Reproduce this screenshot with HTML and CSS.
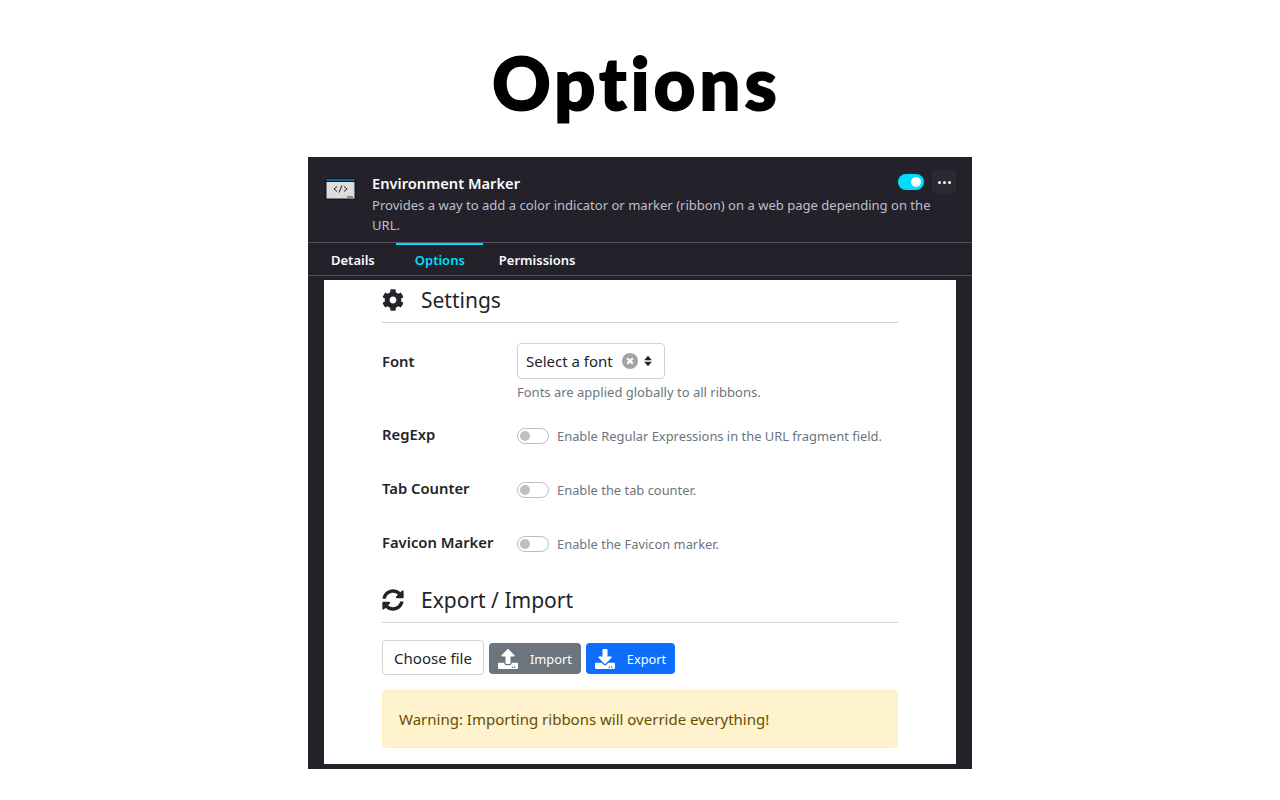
FILE: index.html
```html
<!DOCTYPE html>
<html>
	<head>
		<meta charset="utf-8" />
		<title>Options</title>
		<link rel="stylesheet" href="styles.css">
	</head>

	<body>
		<h1 class="page-title">Options</h1>
		<div class="panel">
			<div class="addon-head">
				<svg class="addon-icon" viewBox="0 0 31 22">
					<rect x="0" y="0" width="31" height="22" rx="3" fill="#14181f" />
					<rect x="1.500" y="1" width="28" height="2" fill="#1a5f96" />
					<rect x="1.500" y="4" width="28" height="16.500" fill="#dcdcdc" />
					<rect x="22" y="18" width="6" height="2.500" fill="#8a8a8a" />
					<path d="M12 8.500L9 11l3 2.500M19 8.500l3 2.500-3 2.500M17 7.500l-3 7" fill="none" stroke="#222" stroke-width="1" />
				</svg>
				<div class="addon-text">
					<div class="addon-name">Environment Marker</div>
					<div class="addon-desc">Provides a way to add a color indicator or marker (ribbon) on a web page depending on the URL.</div>
				</div>
				<div class="addon-actions">
					<span class="main-toggle"></span>
					<span class="more-btn"><i></i><i></i><i></i></span>
				</div>
			</div>
			<div class="tabs">
				<a class="tab">Details</a>
				<a class="tab on">Options</a>
				<a class="tab">Permissions</a>
			</div>
			<div class="sheet">
				<div class="section-title">
					<svg class="section-icon" viewBox="0 0 512 512"><path d="M487.4 315.7l-42.6-24.6c4.3-23.2 4.3-47 0-70.2l42.6-24.6c4.9-2.8 7.1-8.6 5.5-14-11.1-35.6-30-67.8-54.7-94.6-3.8-4.1-10-5.1-14.8-2.3L380.8 110c-17.9-15.4-38.5-27.3-60.8-35.1V25.800c0-5.600-3.900-10.500-9.400-11.700-36.700-8.200-74.300-7.800-109.200 0-5.500 1.200-9.400 6.100-9.400 11.700V75c-22.200 7.900-42.800 19.800-60.800 35.100L88.700 85.500c-4.900-2.800-11-1.900-14.800 2.300-24.700 26.700-43.600 58.900-54.700 94.600-1.700 5.400.6 11.200 5.500 14L67.300 221c-4.300 23.200-4.300 47 0 70.200l-42.600 24.600c-4.900 2.800-7.100 8.600-5.500 14 11.100 35.600 30 67.800 54.700 94.600 3.800 4.100 10 5.100 14.800 2.300l42.600-24.600c17.900 15.400 38.500 27.300 60.800 35.100v49.200c0 5.600 3.900 10.500 9.400 11.700 36.700 8.200 74.300 7.800 109.200 0 5.500-1.200 9.400-6.100 9.400-11.700v-49.200c22.200-7.900 42.800-19.800 60.800-35.100l42.600 24.600c4.900 2.800 11 1.900 14.800-2.300 24.700-26.700 43.600-58.900 54.700-94.600 1.500-5.500-.7-11.300-5.600-14.100zM256 336c-44.100 0-80-35.900-80-80s35.900-80 80-80 80 35.900 80 80-35.900 80-80 80z"/></svg>
					<span>Settings</span>
				</div>

				<div class="row row-font">
					<div class="row-label">Font</div>
					<div class="row-body">
						<div class="font-select">
							<span>Select a font</span>
							<svg class="clear-icon" viewBox="0 0 16 16"><circle cx="8" cy="8" r="8" fill="#a3a3a3" /><path d="M5.200 5.200l5.600 5.600M10.800 5.200l-5.600 5.600" stroke="#fff" stroke-width="2.200" /></svg>
							<svg class="sort-icon" viewBox="0 0 10 14"><path d="M5 1l4.500 5H.500zM5 13L.500 8h9z" fill="#222" /></svg>
						</div>
						<div class="hint">Fonts are applied globally to all ribbons.</div>
					</div>
				</div>

				<div class="row row-switch">
					<div class="row-label">RegExp</div>
					<div class="switch-line"><span class="switch"></span><span class="hint">Enable Regular Expressions in the URL fragment field.</span></div>
				</div>
				<div class="row row-switch">
					<div class="row-label">Tab Counter</div>
					<div class="switch-line"><span class="switch"></span><span class="hint">Enable the tab counter.</span></div>
				</div>
				<div class="row row-switch">
					<div class="row-label">Favicon Marker</div>
					<div class="switch-line"><span class="switch"></span><span class="hint">Enable the Favicon marker.</span></div>
				</div>

				<div class="section-title section-second">
					<svg class="section-icon" viewBox="0 0 512 512"><path d="M370.720 133.280C339.458 104.008 298.888 87.962 255.848 88c-77.458.068-144.328 53.178-162.791 126.850-1.344 5.363-6.122 9.150-11.651 9.150H24.103c-7.498 0-13.194-6.807-11.807-14.176C33.933 94.924 134.813 8 256 8c66.448 0 126.791 26.136 171.315 68.685L463.030 40.970C478.149 25.851 504 36.559 504 57.941V192c0 13.255-10.745 24-24 24H345.941c-21.382 0-32.090-25.851-16.971-40.971l41.750-41.749zM32 296h134.059c21.382 0 32.090 25.851 16.971 40.971l-41.750 41.750c31.262 29.273 71.835 45.319 114.876 45.280 77.418-.07 144.315-53.144 162.787-126.849 1.344-5.363 6.122-9.150 11.651-9.150h57.304c7.498 0 13.194 6.807 11.807 14.176C478.067 417.076 377.187 504 256 504c-66.448 0-126.791-26.136-171.315-68.685L48.970 471.030C33.851 486.149 8 475.441 8 454.059V320c0-13.255 10.745-24 24-24z"/></svg>
					<span>Export / Import</span>
				</div>

				<div class="file-row">
					<span class="btn btn-file">Choose file</span>
					<span class="btn btn-grey">
						<svg viewBox="0 0 512 512"><path d="M296 384h-80c-13.300 0-24-10.700-24-24V192h-87.700c-17.800 0-26.700-21.500-14.100-34.100L242.300 5.700c7.500-7.500 19.800-7.500 27.300 0l152.200 152.200c12.600 12.600 3.700 34.100-14.100 34.100H320v168c0 13.300-10.700 24-24 24zm216-8v112c0 13.300-10.700 24-24 24H24c-13.300 0-24-10.700-24-24V376c0-13.300 10.700-24 24-24h136v8c0 30.900 25.100 56 56 56h80c30.900 0 56-25.100 56-56v-8h136c13.300 0 24 10.700 24 24zm-124 88c0-11-9-20-20-20s-20 9-20 20 9 20 20 20 20-9 20-20zm64 0c0-11-9-20-20-20s-20 9-20 20 9 20 20 20 20-9 20-20z"/></svg>
						Import
					</span>
					<span class="btn btn-blue">
						<svg viewBox="0 0 512 512"><path d="M216 0h80c13.300 0 24 10.700 24 24v168h87.700c17.800 0 26.700 21.500 14.100 34.100L269.700 378.300c-7.500 7.500-19.800 7.500-27.300 0L90.100 226.100c-12.600-12.600-3.700-34.100 14.100-34.100H192V24c0-13.300 10.700-24 24-24zm296 376v112c0 13.300-10.700 24-24 24H24c-13.300 0-24-10.700-24-24V376c0-13.300 10.700-24 24-24h146.700l49 49c20.100 20.100 52.500 20.100 72.600 0l49-49H488c13.300 0 24 10.700 24 24zm-124 88c0-11-9-20-20-20s-20 9-20 20 9 20 20 20 20-9 20-20zm64 0c0-11-9-20-20-20s-20 9-20 20 9 20 20 20 20-9 20-20z"/></svg>
						Export
					</span>
				</div>

				<div class="warning">Warning: Importing ribbons will override everything!</div>
			</div>
		</div>
	</body>

</html>
```

FILE: styles.css
```css
body {
	margin: 0;
	background: #fff;
	font-family: "Noto Sans", "Open Sans", sans-serif;
	color: #212529;
}

.page-title {
	margin: 0;
	height: 157px;
	box-sizing: border-box;
	padding: 34px 7px 0 0;
	text-align: center;
	font-family: "Lato", sans-serif;
	font-size: 72px;
	line-height: 96px;
	font-weight: 900;
	letter-spacing: 4.3px;
	-webkit-text-stroke: 2px #000;
	color: #000;
}

.panel {
	width: 664px;
	height: 612px;
	margin: 0 auto;
	background: #23222b;
	display: flex;
	flex-direction: column;
}

.addon-head {
	display: flex;
	height: 85px;
	box-sizing: border-box;
	padding: 13px 16px 0 17px;
}

.addon-icon {
	width: 31px;
	height: 22px;
	margin-top: 8px;
	flex: none;
}

.addon-text {
	margin: 1px 0 0 16px;
	width: 570px;
	flex: none;
}

.addon-name {
	font-size: 14.67px;
	line-height: 24px;
	font-weight: 600;
	color: #fbfbfe;
}

.addon-desc {
	font-size: 13.05px;
	line-height: 20px;
	color: #bfbfc9;
}

.addon-actions {
	display: flex;
	align-items: center;
	gap: 8px;
	height: 24px;
	margin-left: -44px;
	flex: none;
}

.main-toggle {
	width: 26px;
	height: 16px;
	border-radius: 8px;
	background: #00ddff;
	position: relative;
	flex: none;
}

.main-toggle::after {
	content: "";
	position: absolute;
	right: 3px;
	top: 3px;
	width: 10px;
	height: 10px;
	border-radius: 50%;
	background: #fff;
}

.more-btn {
	width: 24px;
	height: 24px;
	border-radius: 4px;
	background: #2b2a33;
	display: flex;
	align-items: center;
	justify-content: center;
	gap: 2px;
	flex: none;
}

.more-btn i {
	width: 3px;
	height: 3px;
	border-radius: 50%;
	background: #fbfbfe;
}

.tabs {
	display: flex;
	height: 32px;
	border-top: 1px solid #52525e;
	border-bottom: 1px solid #52525e;
	padding-left: 6px;
}

.tab {
	padding: 0 17px;
	border-top: 2px solid transparent;
	font-size: 13px;
	line-height: 30px;
	font-weight: 600;
	color: #fbfbfe;
}

.tab.on {
	color: #00ddff;
	border-top-color: #00ddff;
	padding: 0 18px 0 19px;
	margin: 0 -1px 0 4px;
}

.sheet {
	margin: 4px 16px 0;
	height: 484px;
	background: #fff;
	padding: 0 58px;
}

.section-title {
	display: flex;
	align-items: center;
	height: 43px;
	box-sizing: border-box;
	padding-bottom: 2px;
	border-bottom: 1px solid #ced4da;
	font-size: 21px;
	color: #212529;
}

.section-icon {
	width: 22px;
	height: 22px;
	margin-right: 17px;
	fill: #212529;
	flex: none;
}

.section-second {
	height: 39px;
	padding-bottom: 6px;
}

.row {
	display: flex;
}

.row-font {
	margin-top: 20px;
	height: 79px;
}

.row-switch {
	height: 54px;
}

.row-label {
	width: 135px;
	flex: none;
	font-size: 14.8px;
	line-height: 24px;
	font-weight: 600;
	color: #212529;
}

.row-font .row-label {
	padding-top: 6px;
}

.font-select {
	display: inline-flex;
	align-items: center;
	height: 36px;
	box-sizing: border-box;
	width: 148px;
	padding: 0 8px;
	border: 1px solid #ced4da;
	border-radius: 4px;
	font-size: 15px;
}

.clear-icon {
	width: 16px;
	height: 16px;
	margin-left: 9px;
	flex: none;
}

.sort-icon {
	width: 10px;
	height: 12px;
	margin-left: 5px;
	flex: none;
}

.hint {
	font-size: 13px;
	line-height: 20px;
	color: #6c757d;
}

.row-font .hint {
	margin-top: 3px;
}

.switch-line .hint {
	font-size: 12.9px;
}

.switch-line {
	display: flex;
	align-items: center;
	height: 24px;
	margin-top: 2px;
}

.switch {
	width: 32px;
	height: 16px;
	box-sizing: border-box;
	border: 1px solid #bfbfbf;
	border-radius: 8px;
	margin-right: 8px;
	position: relative;
	flex: none;
}

.switch::after {
	content: "";
	position: absolute;
	left: 2px;
	top: 2px;
	width: 10px;
	height: 10px;
	border-radius: 50%;
	background: #bfbfbf;
}

.file-row {
	display: flex;
	align-items: center;
	margin-top: 17px;
}

.btn {
	display: inline-flex;
	align-items: center;
	box-sizing: border-box;
	border-radius: 4px;
}

.btn svg {
	width: 20px;
	height: 20px;
	fill: #fff;
	margin-right: 12px;
	flex: none;
}

.btn-file {
	height: 35px;
	width: 102px;
	justify-content: center;
	border: 1px solid #ced4da;
	font-size: 15px;
	color: #212529;
}

.btn-grey,
.btn-blue {
	height: 31px;
	padding: 0 9px;
	margin: 2px 0 0 5px;
	font-size: 12.8px;
	color: #fff;
}

.btn-grey {
	background: #6c757d;
}

.btn-blue {
	background: #0d6efd;
}

.warning {
	margin-top: 15px;
	height: 58px;
	box-sizing: border-box;
	padding-left: 16px;
	line-height: 56px;
	background: #fff3cd;
	border: 1px solid #ffecb5;
	border-radius: 4px;
	font-size: 15px;
	color: #664d03;
}
```
